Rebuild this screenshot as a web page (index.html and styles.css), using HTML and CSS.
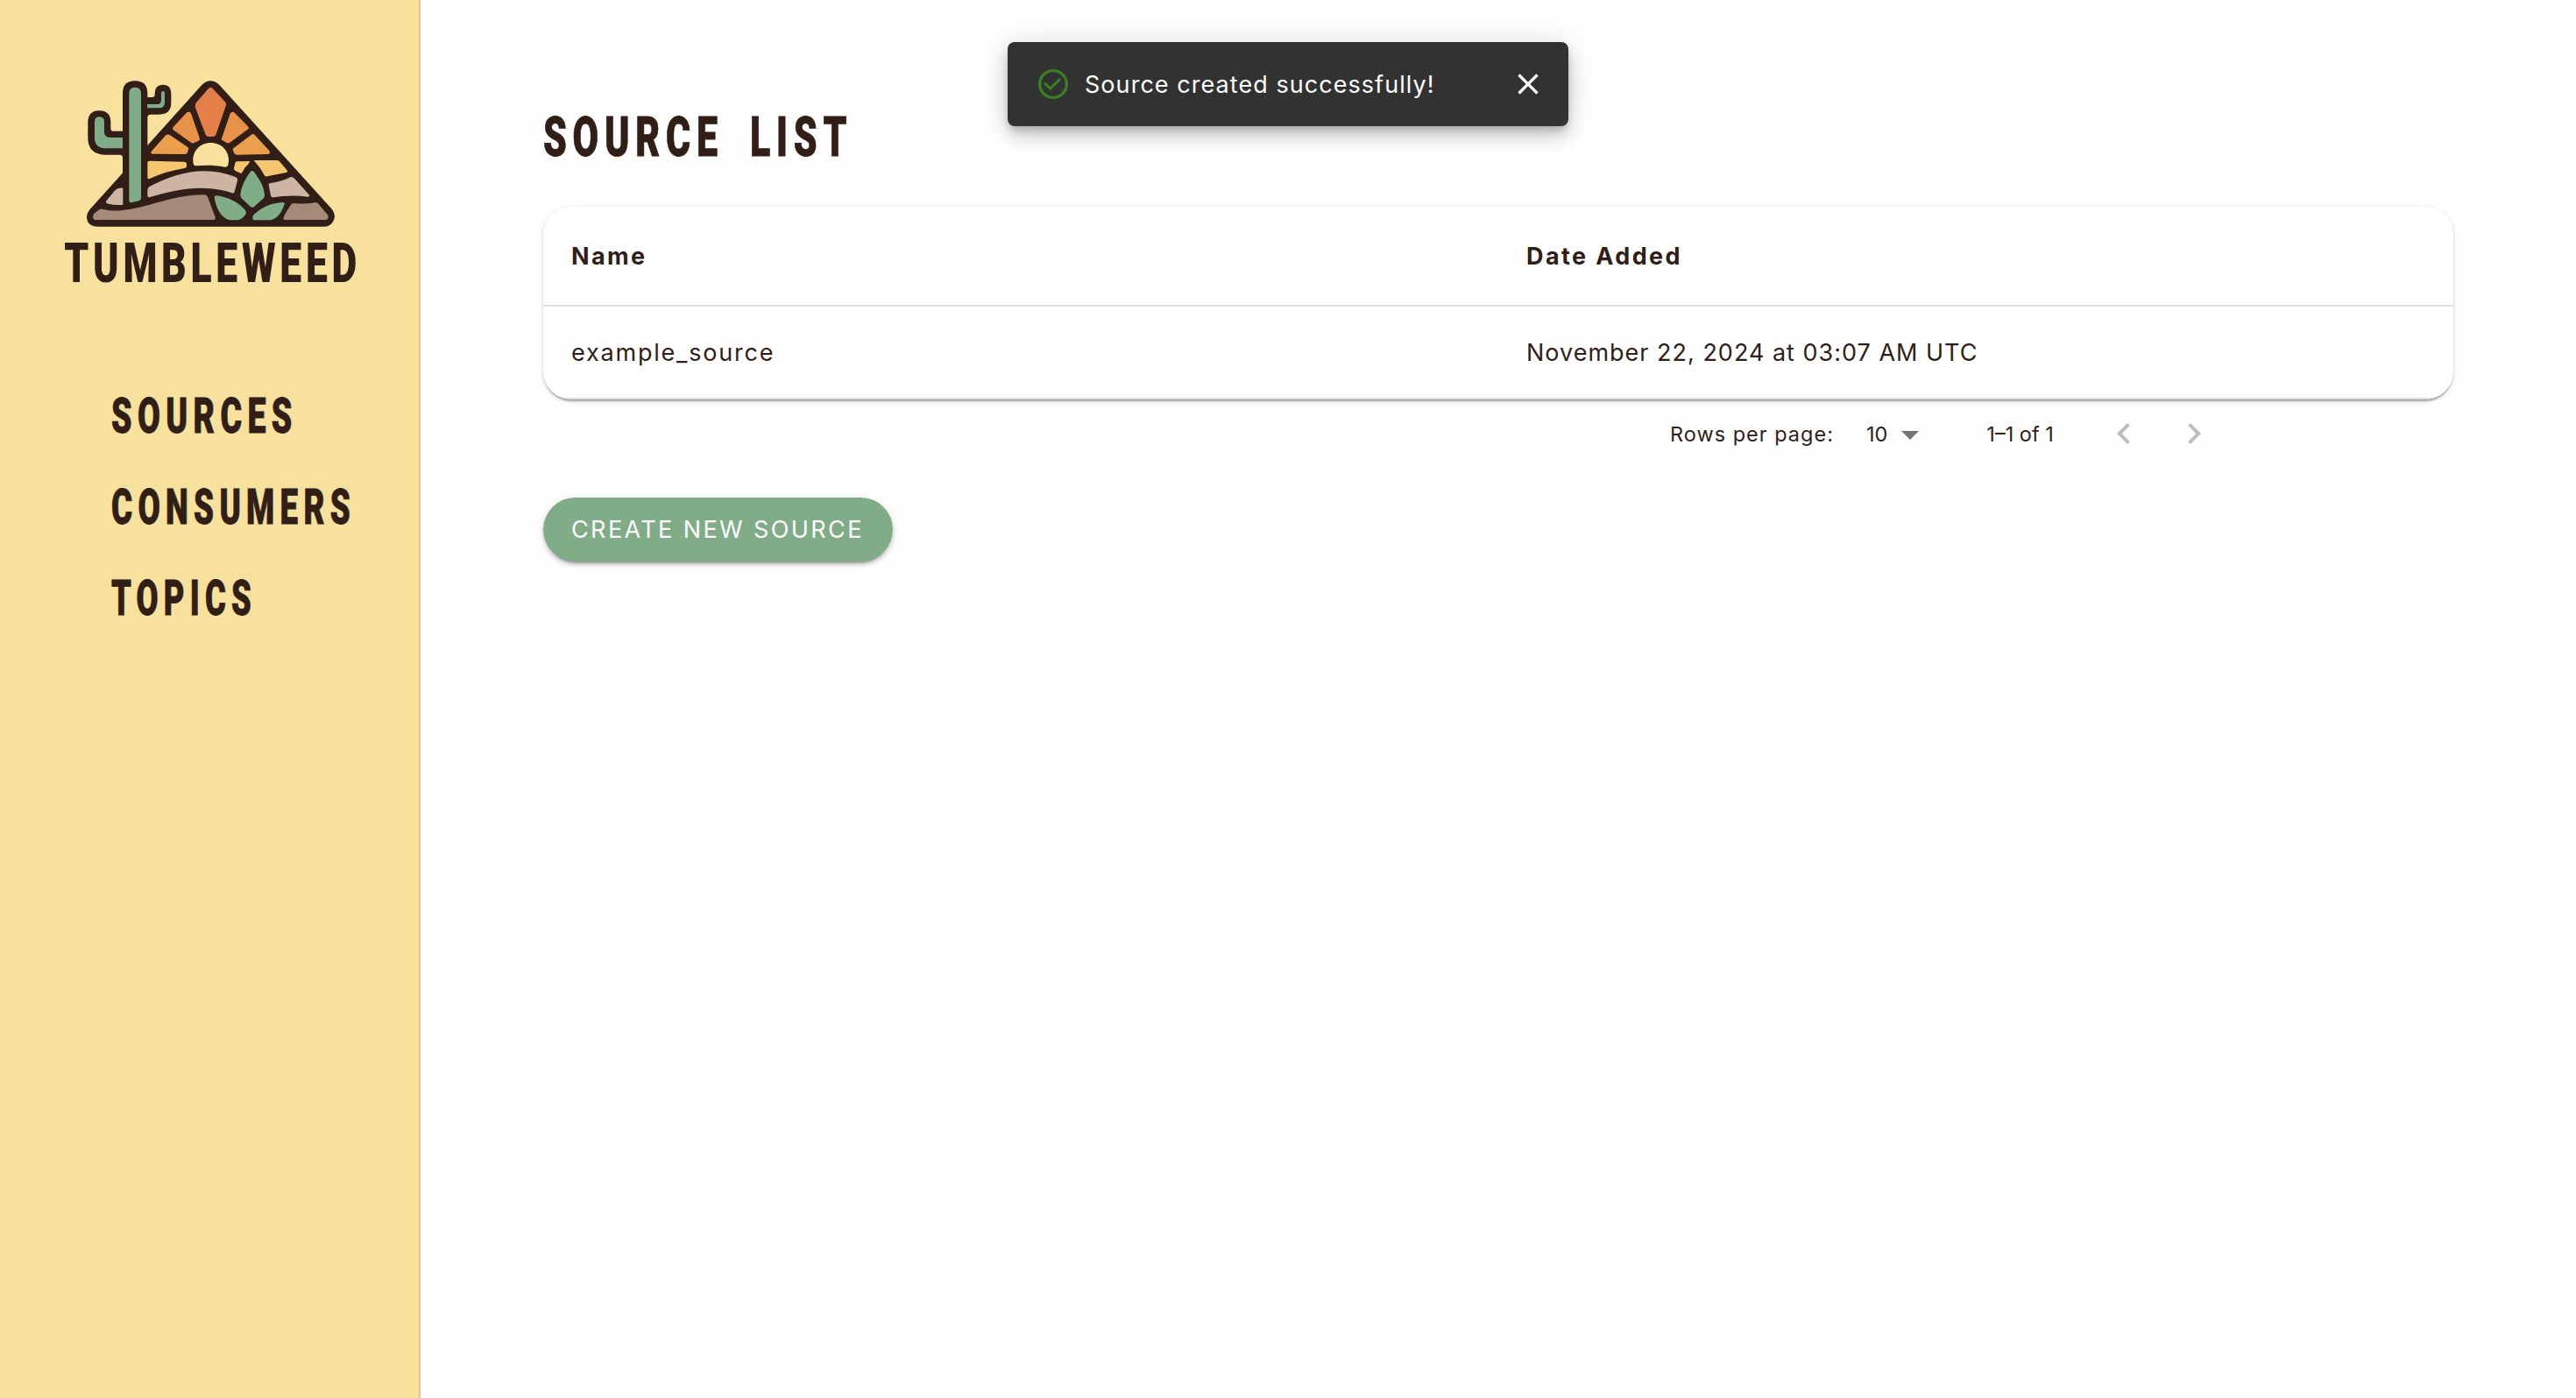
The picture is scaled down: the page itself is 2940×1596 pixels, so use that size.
FILE: index.html
```html
<!DOCTYPE html>
<html lang="en">
<head>
<meta charset="utf-8">
<title>Tumbleweed – Source List</title>
<link rel="stylesheet" href="styles.css">
</head>
<body>
<aside class="sidebar">
  <svg class="logo" viewBox="0 0 1080 780" role="img" aria-label="Tumbleweed">
    <g class="ink">
      <path d="M513 49Q541 24 569 49L955 475Q976 503 956 525Q946 536 930 536H152Q118 534 117 503Q118 488 130 475Z"/>
      <path d="M240 80Q240 37 282 37Q325 37 325 80V93H341Q350 93 350 84V80Q350 50 378 50Q406 50 406 80V112Q406 152 366 152H336Q325 152 325 163V450H240V300Q240 290 230 290H178Q121 288 121 232V180Q121 139 160 139Q199 139 199 180V200Q199 209 208 209H240Z"/>
    </g>
    <g class="green">
      <path d="M262 80Q262 59 282 59Q303 59 303 80V438Q303 446 296 448L270 454Q262 455 262 447Z"/>
      <path d="M144 178Q144 160 160 160Q177 160 177 178V211Q177 231 197 231H240V268H178Q144 266 144 232Z"/>
      <path d="M324 117H358Q372 117 372 102V78Q372 72 378 72Q384 72 384 79V110Q384 130 364 130H324Z"/>
    </g>
    <path fill="#e57f49" d="M534 63Q541 57 548 63L590 108Q596 114 594 121L560 219Q557 228 548 228H534Q526 228 523 219L488 126Q487 118 492 111Z"/>
    <g fill="#e89149">
      <path d="M460 145Q469 141 474 148L503 232Q506 239 499 243L483 250Q479 252 474 248L413 205Q409 200 413 195Z"/>
      <path d="M608 149Q612 142 621 144L669 193Q674 199 668 203L607 248Q602 252 596 249L582 241Q576 238 580 231Z"/>
    </g>
    <g fill="#eb9e4c">
      <path d="M388 223Q394 218 401 222L462 263Q468 268 464 275L461 284Q459 288 452 288L342 287Q334 286 338 279Z"/>
      <path d="M681 221Q687 216 692 222L742 276Q748 287 738 288L630 290Q624 290 622 285L617 273Q616 269 621 266Z"/>
    </g>
    <g fill="#f5c66d">
      <path d="M325 318Q325 311 333 311L450 314Q458 314 459 320V330Q459 334 452 336Q393 345 332 372Q325 375 325 368Z"/>
      <path d="M625 319Q626 313 632 313L676 312Q671 324 659 334L648 352Q646 355 640 352L625 344Q620 341 621 335Z"/>
      <path d="M691 312Q687 309 694 309H767Q773 309 777 313L802 342Q807 348 800 351L735 364Q729 366 725 360Q712 334 691 312Z"/>
    </g>
    <path fill="#f7e19d" d="M482 321C475 282 502 249 541 249C583 249 611 284 601 325Q599 333 590 332C555 325 522 325 491 328Q483 329 482 321Z"/>
    <g fill="#ceb4a3">
      <path d="M333 398C429 349 524 326 626 366Q635 370 633 379L623 417Q621 423 614 421C521 390 430 406 333 435Q325 438 325 429V410Q325 402 333 398Z"/>
      <path d="M740 394Q739 388 747 387Q782 383 814 367Q822 364 828 371L878 427Q882 434 874 434Q815 426 755 436Q748 437 747 430Z"/>
      <path d="M241 404V461Q216 464 191 458Q181 456 183 449L212 414Q223 402 241 404Z"/>
    </g>
    <g fill="#a58a79">
      <path d="M138 503Q137 496 144 490L161 477Q167 474 174 477C279 500 385 426 519 427Q527 427 531 434L557 503Q559 513 550 513H149Q139 513 138 503Z"/>
      <path d="M790 508Q791 499 817 460Q820 456 827 456Q863 460 899 454Q905 453 910 458L943 497Q947 510 936 513H797Q791 514 790 508Z"/>
    </g>
    <g class="green">
      <path d="M677 349Q683 341 690 349C710 377 725 400 726 431Q725 436 721 440L690 468Q684 473 677 467L646 438Q642 434 643 427C647 395 661 371 677 349Z"/>
      <path d="M554 434Q556 428 563 430C602 435 640 455 660 480Q665 488 660 496Q647 514 628 514H606C574 506 557 464 554 434Z"/>
      <path d="M685 503Q685 499 689 495C719 467 750 455 788 453Q796 453 794 460C784 485 774 508 747 514H690Q684 513 685 503Z"/>
    </g>
    <text class="wordmark" x="40" y="726" textLength="1016" lengthAdjust="spacingAndGlyphs">TUMBLEWEED</text>
  </svg>
  <nav class="nav">
    <a class="display nav-link sources"><span>SOURCES</span></a>
    <a class="display nav-link consumers"><span>CONSUMERS</span></a>
    <a class="display nav-link topics"><span>TOPICS</span></a>
  </nav>
</aside>
<main class="main">
  <h1 class="display title"><span>SOURCE LIST</span></h1>
  <div class="card">
    <div class="row head"><span class="cell">Name</span><span class="cell">Date Added</span></div>
    <div class="row"><span class="cell name">example_source</span><span class="cell date">November 22, 2024 at 03:07 AM UTC</span></div>
  </div>
  <div class="pager">
    <span class="pager-label">Rows per page:</span>
    <span class="pager-size">10</span>
    <svg class="caret" viewBox="0 0 20 10"><path d="M0 0h20L10 10z"/></svg>
    <span class="pager-range">1–1 of 1</span>
    <svg class="chev prev" viewBox="0 0 24 24"><path d="M15.41 16.59 10.83 12l4.58-4.59L14 6l-6 6 6 6z"/></svg>
    <svg class="chev" viewBox="0 0 24 24"><path d="M8.59 16.59 13.17 12 8.59 7.41 10 6l6 6-6 6z"/></svg>
  </div>
  <button class="create">CREATE NEW SOURCE</button>
</main>
<div class="toast" role="status">
  <svg class="toast-icon" viewBox="0 0 24 24"><circle cx="12" cy="12" r="9.2" stroke-width="2"/><path d="M6.1 11.3 10 15.1l6.9-6.6" stroke-width="1.8"/></svg>
  <span class="toast-text">Source created successfully!</span>
  <svg class="toast-close" viewBox="0 0 24 24"><path d="M19 6.41 17.59 5 12 10.59 6.41 5 5 6.41 10.59 12 5 17.59 6.41 19 12 13.41 17.59 19 19 17.59 13.41 12z"/></svg>
</div>
</body>
</html>
```
FILE: styles.css
```css
* { box-sizing: border-box; }
body {
  margin: 0;
  display: flex;
  min-height: 100vh;
  background: #fefefe;
  color: #301e17;
  font-family: Inter, "Open Sans", sans-serif;
  font-size: 27px;
}
.display {
  font-family: Roboto, sans-serif;
  font-weight: 900;
  white-space: nowrap;
  -webkit-text-stroke: .8px #301e17;
}
.display span { display: inline-block; transform-origin: 0 50%; }
.sidebar {
  width: 480px;
  padding: 80px 0 0 60px;
  background: #f7e19d;
  border-right: 2px solid #d9c88f;
}
.logo { display: block; width: 360px; height: 260px; overflow: visible; }
.ink { fill: #301e17; }
.green { fill: #80ac88; }
.wordmark { fill: #301e17; font: 900 190px Roboto, sans-serif; letter-spacing: 20px; }
.nav { display: flex; flex-direction: column; padding: 83px 0 0 67px; }
.nav-link { font-size: 55px; line-height: 104px; letter-spacing: 9.4px; }
.sources span { transform: scaleX(.682); }
.consumers span { transform: scaleX(.668); }
.topics span { transform: scaleX(.66); }
.main { flex: 1; padding: 117px 140px 0; }
.title { margin: 0; font-size: 63px; line-height: 80px; letter-spacing: 10px; word-spacing: 19px; }
.title span { transform: scaleX(.68); }
.card {
  margin-top: 39px;
  border-radius: 32px;
  overflow: hidden;
  background: #fff;
  box-shadow: 0 4px 2px -2px rgba(0,0,0,.2), 0 2px 2px rgba(0,0,0,.14), 0 2px 6px rgba(0,0,0,.12);
}
.row { display: grid; grid-template-columns: 1fr 1fr; height: 106px; align-items: center; border-bottom: 2px solid #e0e0e0; }
.head { height: 114px; font-weight: 700; letter-spacing: 2.4px; }
.cell { padding-left: 32px; }
.name { letter-spacing: 1.8px; }
.date { letter-spacing: 1px; }
.pager { display: flex; align-items: center; height: 78px; padding-left: 1286px; font-size: 23.5px; }
.pager-label { letter-spacing: 1px; }
.pager-size { margin-left: 37px; }
.caret { width: 20px; height: 10px; margin: 3px 0 0 16px; fill: #757575; }
.pager-range { margin-left: 77px; }
.chev { width: 48px; height: 48px; margin-left: 32px; fill: #bdbdbd; }
.prev { margin-left: 56px; }
.create {
  display: flex; align-items: center;
  width: 399px; height: 73px; margin: 34px 0 0; padding: 0 0 0 32px;
  border: 0; border-radius: 37px;
  background: #80ac88; color: #fff;
  font: inherit; letter-spacing: 2.4px; white-space: nowrap;
  box-shadow: 0 6px 2px -4px rgba(0,0,0,.2), 0 4px 4px rgba(0,0,0,.14), 0 2px 10px rgba(0,0,0,.12);
}
.toast {
  position: absolute; left: 1150px; top: 48px;
  display: flex; align-items: center;
  width: 640px; height: 96px; padding: 0 26px 0 32px;
  border-radius: 8px; background: #323232; color: #fff;
  box-shadow: 0 6px 10px -2px rgba(0,0,0,.2), 0 12px 20px rgba(0,0,0,.14), 0 2px 36px rgba(0,0,0,.12);
}
.toast-icon { width: 40px; height: 40px; fill: none; stroke: #388020; }
.toast-text { margin-left: 16px; letter-spacing: 1.05px; }
.toast-close { width: 40px; height: 40px; margin-left: auto; fill: #fff; }
```
